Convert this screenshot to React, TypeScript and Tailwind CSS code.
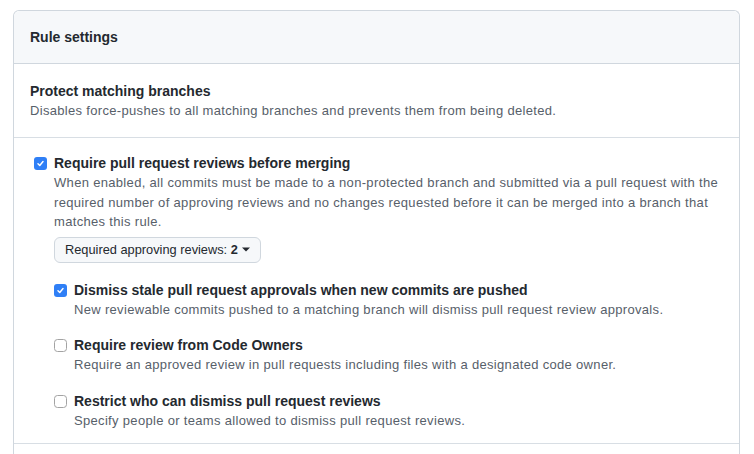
type CheckboxProps = {
  checked?: boolean;
};

function Checkbox({ checked }: CheckboxProps) {
  if (checked) {
    return (
      <span className="flex h-[13px] w-[13px] items-center justify-center rounded-[3px] bg-[#2f7ff6]">
        <svg className="h-[9px] w-[9px]" viewBox="0 0 10 10" fill="none">
          <path d="M2.2 5.2L4.2 7.2L7.8 2.8" stroke="white" strokeWidth={1.6} strokeLinecap="round" strokeLinejoin="round" />
        </svg>
      </span>
    );
  }
  return <span className="block h-[13px] w-[13px] rounded-[3.5px] border border-[#a3a3a3] bg-white" />;
}

type OptionProps = {
  checked?: boolean;
  title: string;
  description: string;
  children?: React.ReactNode;
};

function Option({ checked, title, description, children }: OptionProps) {
  return (
    <div className="flex">
      <div className="w-[20px] shrink-0 pt-[4px]">
        <Checkbox checked={checked} />
      </div>
      <div className="flex-1">
        <div className="text-[14px] font-bold leading-[20px] text-[#24292f]">{title}</div>
        <p className="text-[13px] leading-[19.5px] tracking-[0.32px] text-[#57606a]">{description}</p>
        {children}
      </div>
    </div>
  );
}

export default function App() {
  return (
    <div className="min-h-[454px] bg-white pl-[13px] pt-[10px] font-['Liberation_Sans',Arial,sans-serif]">
      <div className="w-[727px] rounded-t-[6px] border border-b-0 border-[#d0d7de]">
        {/* Header */}
        <div className="flex h-[53px] items-center rounded-t-[6px] border-b border-[#d0d7de] bg-[#f6f8fa] px-4">
          <h2 className="text-[14px] font-bold text-[#24292f]">Rule settings</h2>
        </div>

        {/* Protect matching branches */}
        <div className="border-b border-[#d8dee4] px-4 pb-[16px] pt-[17px]">
          <div className="text-[14px] font-bold leading-[20px] text-[#24292f]">Protect matching branches</div>
          <p className="text-[13px] leading-[20px] tracking-[0.32px] text-[#57606a]">
            Disables force-pushes to all matching branches and prevents them from being deleted.
          </p>
        </div>

        {/* Pull request reviews */}
        <div className="border-b border-[#d8dee4] pb-[13px] pl-[20px] pr-[14px] pt-[15px]">
          <Option
            checked
            title="Require pull request reviews before merging"
            description="When enabled, all commits must be made to a non-protected branch and submitted via a pull request with the required number of approving reviews and no changes requested before it can be merged into a branch that matches this rule."
          >
            <button className="mt-[5px] flex h-[26px] items-center rounded-[6px] border border-[#d0d7de] bg-[#f6f8fa] pl-[10px] pr-[10px] text-[12.8px] text-[#24292f]">
              Required approving reviews:&nbsp;<span className="font-bold">2</span>
              <svg className="ml-[4px] h-[5px] w-[8px]" viewBox="0 0 8 5">
                <path d="M0 0.5H8L4 4.5Z" fill="#24292f" />
              </svg>
            </button>

            <div className="mt-[17px] flex flex-col gap-[16px]">
              <Option
                checked
                title="Dismiss stale pull request approvals when new commits are pushed"
                description="New reviewable commits pushed to a matching branch will dismiss pull request review approvals."
              />
              <Option
                title="Require review from Code Owners"
                description="Require an approved review in pull requests including files with a designated code owner."
              />
              <Option
                title="Restrict who can dismiss pull request reviews"
                description="Specify people or teams allowed to dismiss pull request reviews."
              />
            </div>
          </Option>
        </div>
        <div className="h-[10px]" />
      </div>
    </div>
  );
}
